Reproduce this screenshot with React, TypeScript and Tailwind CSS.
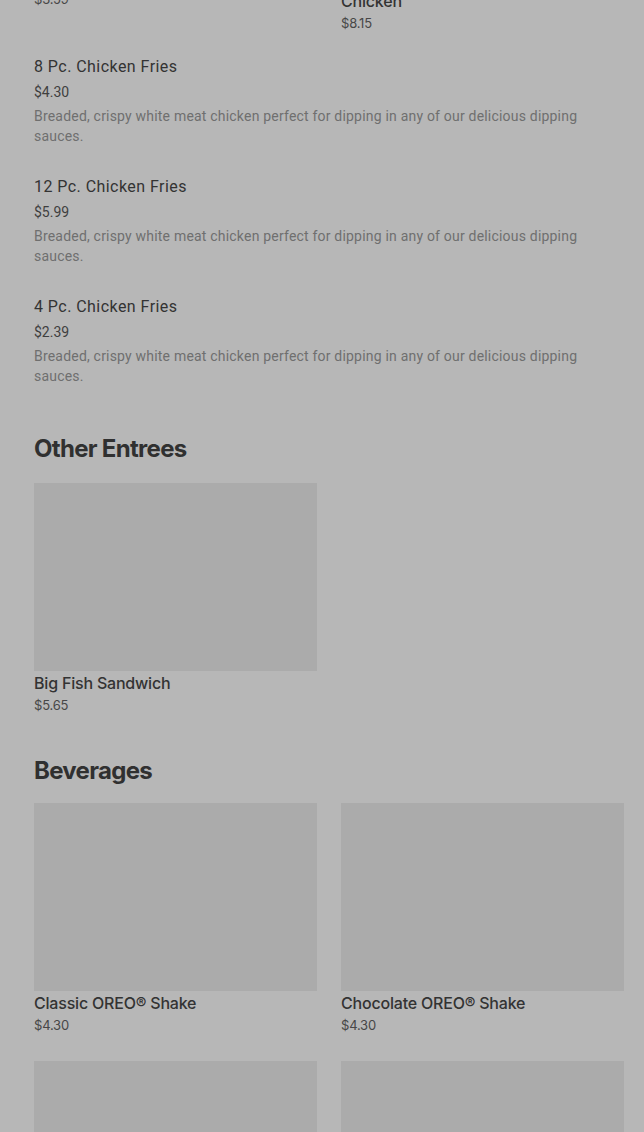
import React from 'react';

const fries = [
  { name: '8 Pc. Chicken Fries', price: '$4.30' },
  { name: '12 Pc. Chicken Fries', price: '$5.99' },
  { name: '4 Pc. Chicken Fries', price: '$2.39' },
];

const friesDesc =
  'Breaded, crispy white meat chicken perfect for dipping in any of our delicious dipping sauces.';

function Card({ title, price }: { title: React.ReactNode; price: string }) {
  return (
    <div className="flex flex-col">
      <div className="h-[188px] w-full bg-[#ababab]" />
      <p className="text-[16px] leading-6 font-medium tracking-[-0.2px] text-[#333333]">{title}</p>
      <p className="text-[13px] leading-5 tracking-[-0.2px] text-[#474747]">{price}</p>
    </div>
  );
}

export default function App() {
  return (
    <div
      className="h-[1132px] overflow-hidden bg-[#b7b7b7] pl-[34px] pr-[20px]"
      style={{ fontFamily: 'Inter, "Noto Sans", sans-serif' }}
    >
      {/* cut-off row from the previous section */}
      <div className="mt-[-223px] grid grid-cols-2 items-start gap-x-6">
        <Card title="Chicken Nuggets" price="$3.59" />
        <Card
          title={
            <>
              Grilled Chicken Sandwich &amp; Crispy
              <br />
              Chicken
            </>
          }
          price="$8.15"
        />
      </div>

      <div className="mt-[22px] flex flex-col" style={{ fontFamily: 'Roboto, sans-serif' }}>
        {fries.map((f) => (
          <div key={f.name} className="pb-[29px] last:pb-0">
            <p className="text-[16px] leading-6 tracking-[0.45px] text-[#333333]">{f.name}</p>
            <p className="mt-[3px] text-[14px] leading-5 text-[#3f3f3f]">{f.price}</p>
            <p className="mt-1 pr-[30px] text-[14px] leading-5 tracking-[0.2px] text-[#6f6f6f]">{friesDesc}</p>
          </div>
        ))}
      </div>

      <section className="mt-[47px]">
        <h2 className="mb-[18px] text-[24px] leading-8 font-bold tracking-[-0.7px] text-[#303030]">
          Other Entrees
        </h2>
        <div className="grid grid-cols-2 gap-x-6">
          <Card title="Big Fish Sandwich" price="$5.65" />
        </div>
      </section>

      <section className="mt-[40px]">
        <h2 className="mb-[16px] text-[24px] leading-8 font-bold tracking-[-0.7px] text-[#303030]">
          Beverages
        </h2>
        <div className="grid grid-cols-2 gap-x-6 gap-y-[26px]">
          <Card title="Classic OREO® Shake" price="$4.30" />
          <Card title="Chocolate OREO® Shake" price="$4.30" />
          <Card title="Vanilla Shake" price="$3.69" />
          <Card title="Chocolate Shake" price="$3.69" />
        </div>
      </section>
    </div>
  );
}
